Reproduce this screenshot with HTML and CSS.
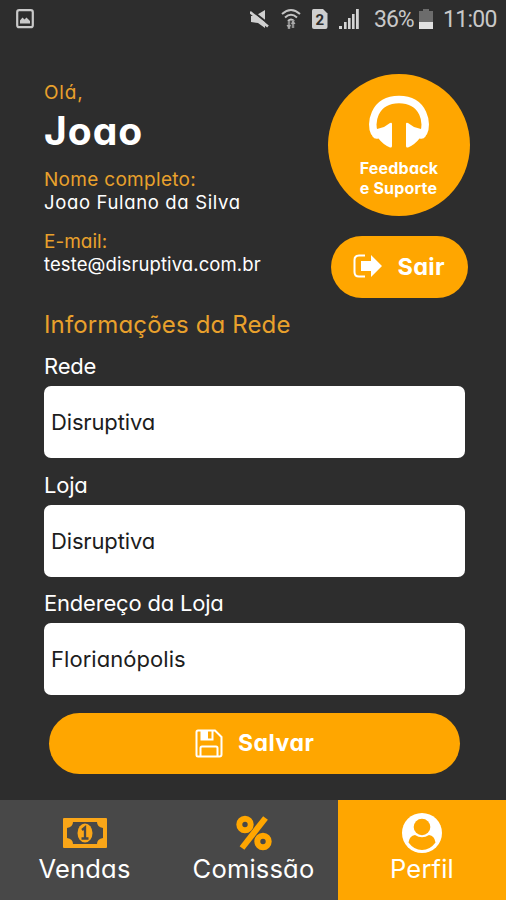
FILE: index.html
```
<!DOCTYPE html>
<html lang="pt-BR">
<head>
    <meta charset="UTF-8">
    <meta name="viewport" content="width=device-width, initial-scale=1.0">
    <title>Perfil</title>
    <link rel="stylesheet" href="styles.css">
</head>
<body>
    <div class="statusbar">
        <svg class="st-picture" width="18" height="20" viewBox="0 0 18 20">
            <rect x="1.2" y="1.2" width="15.6" height="17" rx="2" fill="none" stroke="#c9c9c9" stroke-width="2.2"/>
            <path d="M4 14.500v-3l2.500-3 2 2 2-2 3.500 3.500v2.500z" fill="#c9c9c9"/>
        </svg>
        <svg class="st-mute" width="20" height="20" viewBox="0 0 20 20">
            <path d="M1 7h4l10-6v18l-7-5-7-1z" fill="#d0d0d0"/>
            <path d="M1 1l19 15" stroke="#2d2d2d" stroke-width="2"/>
            <path d="M0 3l18 14.500" stroke="#d0d0d0" stroke-width="2.600"/>
        </svg>
        <svg class="st-wifi" width="20" height="22" viewBox="0 0 20 22">
            <path d="M1 6q9-8 18 0M4 9.500q6-5.500 12 0M7 13q3-3 6 0" fill="none" stroke="#c4c4c4" stroke-width="2"/>
            <path d="M8 13v8M12 12v8" stroke="#8d8d8d" stroke-width="2.500"/>
            <path d="M5.500 17l2.500 4 2-4zM10 16l2-4 2.500 4z" fill="#aaa"/>
        </svg>
        <svg class="st-sim" width="16" height="20" viewBox="0 0 16 20">
            <path d="M0 1.500Q0 0 1.500 0H11l4.500 4.500V18q0 2-2 2H2q-2 0-2-2z" fill="#cfcfcf"/>
            <text x="7.700" y="15.500" class="sim-number">2</text>
        </svg>
        <svg class="st-signal" width="20" height="20" viewBox="0 0 20 20">
            <path d="M0 20v-3h3v3zM5 20v-7h2.600v7zM9 20v-11h2.600v11zM13 20v-15h2.600v15zM17 20v-20h2.800v20z" fill="#d4d4d4"/>
        </svg>
        <span class="st-percent">36%</span>
        <svg class="st-battery" width="14" height="20" viewBox="0 0 14 20">
            <path d="M4 0h6v2h4v11H0V2h4z" fill="#6c6c6c"/>
            <path d="M0 13h14v7H0z" fill="#e0e0e0"/>
        </svg>
        <span class="st-time">11:00</span>
    </div>

    <main>
        <div class="header">
            <div class="user">
                <div class="hello">Olá,</div>
                <h1>Joao</h1>
                <div class="info">
                    <div class="info-label name-label">Nome completo:</div>
                    <div class="info-value name-value">Joao Fulano da Silva</div>
                </div>
                <div class="info">
                    <div class="info-label">E-mail:</div>
                    <div class="info-value mail-value">teste@disruptiva.com.br</div>
                </div>
            </div>
            <div class="actions">
                <div class="support">
                    <svg width="62" height="54" viewBox="0 0 62 54">
                        <path d="M6.500 38C2 30 5 4.500 31 4.500S60 30 55.500 38" fill="none" stroke="#fff" stroke-width="7.500"/>
                        <path d="M3 38l6-4 7-2 6-4q2-1 2 1v22q0 2-2 1.500-7-3-11.500-9-4 1-6-2zM59 38l-6-4-7-2-6-4q-2-1-2 1v22q0 2 2 1.500 7-3 11.500-9 4 1 6-2z" fill="#fff"/>
                    </svg>
                    <div class="support-text">Feedback<br>e Suporte</div>
                </div>
                <button class="logout">
                    <svg width="30" height="24" viewBox="0 0 30 24">
                        <path d="M12 1.500H6Q1.500 1.500 1.500 6v12Q1.500 22.500 6 22.500h6" fill="none" stroke="#fff" stroke-width="2"/>
                        <path d="M8 7h10V1l11 11-11 11v-6H8z" fill="#fff"/>
                    </svg>
                    <span>Sair</span>
                </button>
            </div>
        </div>

        <h2>Informações da Rede</h2>

        <form class="fields">
            <div class="field">
                <label for="rede">Rede</label>
                <input id="rede" type="text" value="Disruptiva">
            </div>
            <div class="field">
                <label for="loja">Loja</label>
                <input id="loja" type="text" value="Disruptiva">
            </div>
            <div class="field">
                <label for="endereco">Endereço da Loja</label>
                <input class="address" id="endereco" type="text" value="Florianópolis">
            </div>
            <button type="button" class="save">
                <svg width="28" height="29" viewBox="0 0 28 29" fill="none" stroke="#fff" stroke-width="2">
                    <path d="M3 1.500h17l6.500 6.500v17.500q0 2-2 2H3q-1.500 0-1.500-1.500V3q0-1.500 1.500-1.500z"/>
                    <path d="M5.500 27v-8q0-1.500 1.500-1.500h14q1.500 0 1.500 1.500v8"/>
                    <path d="M6.500 2v8.500h11V2"/>
                    <path d="M6 1h7v9H6z" fill="#fff" stroke="none"/>
                </svg>
                <span>Salvar</span>
            </button>
        </form>
    </main>

    <nav>
        <a class="tab vendas">
            <svg width="44" height="30" viewBox="0 0 44 30">
                <rect width="44" height="30" rx="1" fill="#faa618"/>
                <path d="M10 4h24q0 5 6 6v10q-6 1-6 6H10q0-5-6-6V10q6-1 6-6z" fill="#484848"/>
                <ellipse cx="22" cy="15" rx="7.500" ry="9.500" fill="#faa618"/>
                <path d="M19 12l3-2.500v11M18.500 20.500h7" fill="none" stroke="#484848" stroke-width="2.300"/>
            </svg>
            <span>Vendas</span>
        </a>
        <a class="tab comissao">
            <svg width="36" height="36" viewBox="0 0 36 36" fill="none" stroke="#ffa600">
                <circle cx="9" cy="9.500" r="5.700" stroke-width="6"/>
                <circle cx="27" cy="26.500" r="5.700" stroke-width="6"/>
                <path d="M29.500 3L6 33" stroke-width="6"/>
            </svg>
            <span>Comissão</span>
        </a>
        <a class="tab perfil active">
            <svg width="40" height="40" viewBox="0 0 40 40">
                <circle cx="20" cy="20" r="20" fill="#fff"/>
                <circle cx="20" cy="14" r="8.300" fill="#ffa600"/>
                <path d="M6.500 29.500q1-7 6.500-7.500 7 4.500 14 0 5.500.5 6.500 7.500Q28 37 20 37T6.500 29.500z" fill="#ffa600"/>
            </svg>
            <span>Perfil</span>
        </a>
    </nav>
</body>
</html>
```
FILE: styles.css
```
* {
    box-sizing: border-box;
}

body {
    margin: 0;
    height: 900px;
    display: flex;
    flex-direction: column;
    background-color: #2d2d2d;
    color: #fff;
    font-family: Inter, "Liberation Sans", sans-serif;
    font-feature-settings: "cv11";
    white-space: nowrap;
    overflow: hidden;
}

svg {
    display: block;
    flex: none;
}

/* status bar */
.statusbar {
    height: 38px;
    padding-left: 16px;
    display: flex;
    align-items: center;
    font-family: Roboto, sans-serif;
    font-size: 23px;
    color: #c8c8c8;
}

.st-mute {
    margin-left: 216px;
}

.st-wifi {
    margin-left: 11px;
}

.st-sim {
    margin-left: 11px;
}

.sim-number {
    font: bold 15px Roboto, sans-serif;
    text-anchor: middle;
    fill: #2d2d2d;
}

.st-signal {
    margin-left: 11px;
}

.st-percent {
    margin-left: 15px;
    width: 41px;
    letter-spacing: -1px;
}

.st-battery {
    margin-left: 4px;
}

.st-time {
    margin-left: 10px;
    letter-spacing: -0.7px;
}

/* profile */
main {
    flex: 1;
    padding: 36px 36px 0 44px;
}

.header {
    display: flex;
    justify-content: space-between;
    height: 236px;
}

.user {
    padding-top: 7px;
}

.hello {
    height: 27px;
    line-height: 24px;
    font-size: 19px;
    letter-spacing: 0.8px;
    color: #e9a12c;
}

h1 {
    margin: 0 0 14px;
    font-size: 39px;
    line-height: 46px;
    letter-spacing: 1px;
}

.info {
    margin-bottom: 16px;
    font-size: 19px;
    line-height: 23px;
}

.info-label {
    color: #e9a12c;
}

.name-label {
    letter-spacing: 0.3px;
}

.info-value {
    font-size: 18.5px;
}

.name-value {
    letter-spacing: 0.65px;
}

.mail-value {
    letter-spacing: 0.1px;
}

.actions {
    width: 142px;
    display: flex;
    flex-direction: column;
    align-items: center;
    gap: 20px;
}

.support {
    width: 142px;
    height: 142px;
    padding-top: 21px;
    border-radius: 50%;
    background-color: #ffa600;
    display: flex;
    flex-direction: column;
    align-items: center;
}

.support-text {
    margin-top: 9px;
    font-size: 16px;
    font-weight: bold;
    line-height: 20px;
    letter-spacing: 0.2px;
}

button {
    border: none;
    padding: 0;
    background-color: #ffa600;
    color: #fff;
    font-family: inherit;
    font-feature-settings: inherit;
    font-weight: bold;
    display: flex;
    align-items: center;
}

.logout {
    width: 137px;
    height: 62px;
    padding: 0 0 2px 22px;
    gap: 15px;
    border-radius: 31px;
    font-size: 23.5px;
    letter-spacing: 0.3px;
}

h2 {
    margin: 0 0 13px;
    font-size: 24px;
    font-weight: normal;
    line-height: 30px;
    letter-spacing: 0.15px;
    color: #e9a12c;
}

.field {
    width: 421px;
    margin-bottom: 13.5px;
}

label {
    display: block;
    margin-bottom: 7px;
    font-size: 22px;
    line-height: 26px;
    letter-spacing: -0.2px;
}

input {
    display: block;
    width: 100%;
    height: 72px;
    padding: 0 7px;
    border: none;
    border-radius: 7px;
    background-color: #fff;
    color: #1d1d1d;
    font-family: inherit;
    font-feature-settings: inherit;
    font-size: 22px;
    letter-spacing: -0.15px;
}

.address {
    letter-spacing: 0.05px;
}

.save {
    width: 411px;
    height: 61px;
    margin: 18px 0 0 5px;
    padding: 0 0 1px 146px;
    gap: 15px;
    border-radius: 31px;
    font-size: 23px;
    letter-spacing: 0.5px;
}

/* bottom tabs */
nav {
    height: 100px;
    display: grid;
    grid-template-columns: 169px 169px 168px;
    background-color: #484848;
}

.tab {
    display: flex;
    flex-direction: column;
    align-items: center;
    justify-content: space-between;
    padding-bottom: 15px;
    font-size: 25.5px;
    line-height: 32px;
    letter-spacing: 0.2px;
}

.vendas {
    padding-top: 18px;
}

.comissao {
    padding-top: 15px;
}

.perfil {
    padding-top: 13px;
}

.active {
    background-color: #ffa600;
}
```
